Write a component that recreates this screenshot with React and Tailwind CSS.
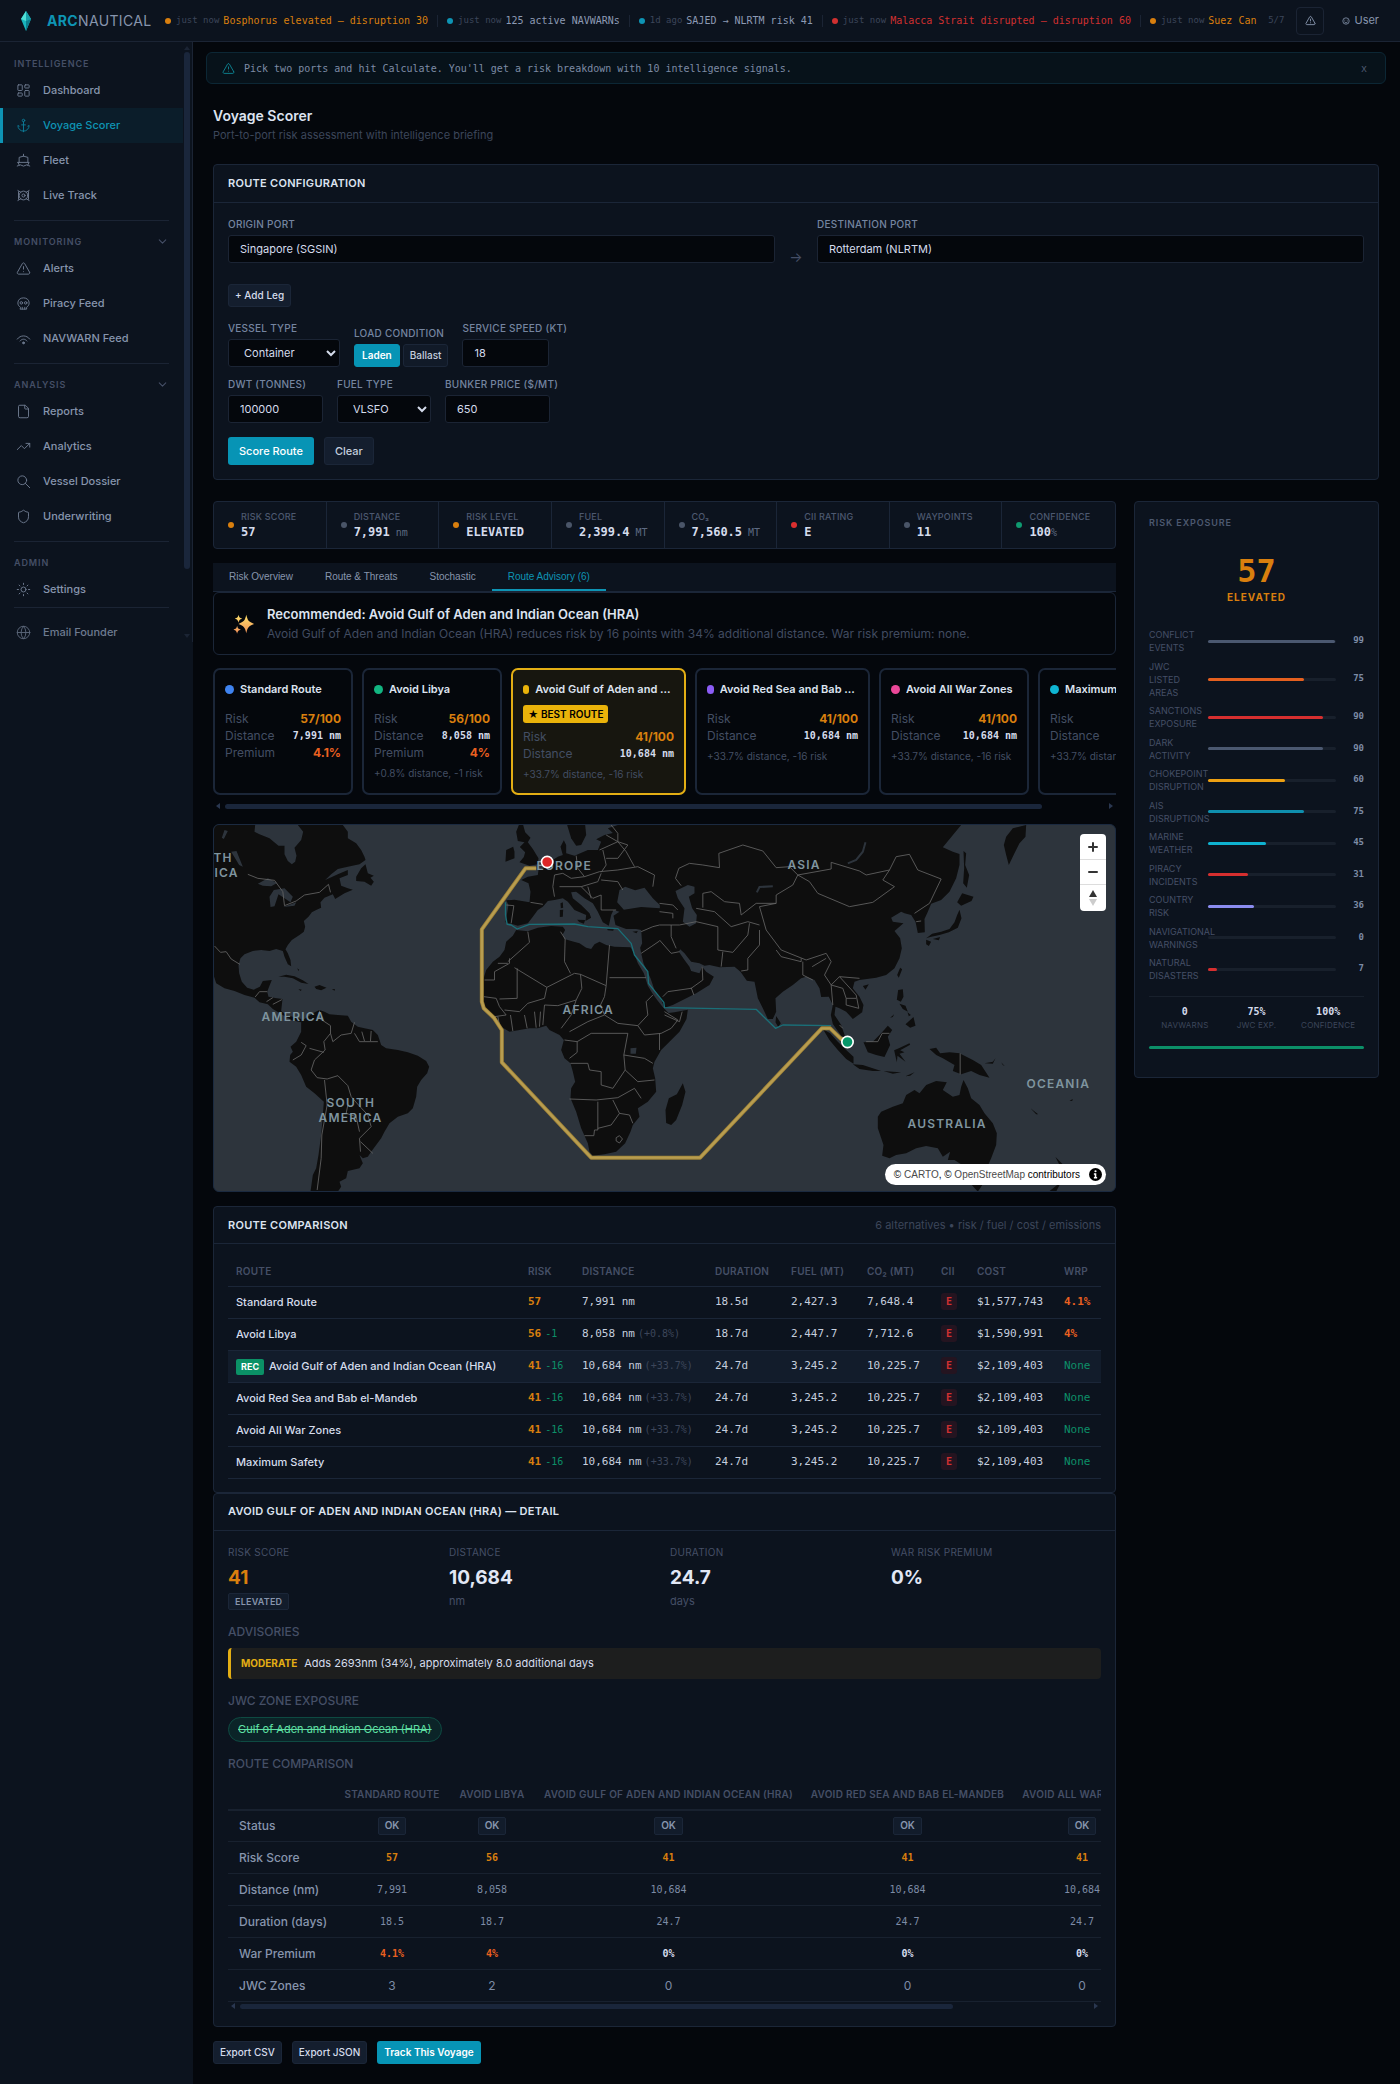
import {useState} from "react";
import {
    Anchor,
    ChevronDown,
    File,
    Globe,
    LayoutDashboard,
    Shield,
    Sun,
    TrendingUp,
    TriangleAlert,
} from "lucide-react";

const MONO = "font-['DejaVu_Sans_Mono','Liberation_Mono',monospace]"

const ticker = [
    {time: "just now", text: "Bosphorus elevated — disruption 30", dot: "bg-[#d97f0e]", color: "text-[#d97f0e]"},
    {time: "just now", text: "125 active NAVWARNs", dot: "bg-[#0e94b4]", color: "text-[#8c9ab4]"},
    {time: "1d ago", text: "SAJED → NLRTM risk 41", dot: "bg-[#0e94b4]", color: "text-[#8c9ab4]"},
    {time: "just now", text: "Malacca Strait disrupted — disruption 60", dot: "bg-[#d03030]", color: "text-[#d03030]"},
    {time: "just now", text: "Suez Can", dot: "bg-[#d97f0e]", color: "text-[#d97f0e]"},
]

function ShipIcon(props) {
    return (
        <svg viewBox="0 0 24 24" fill="none" stroke="currentColor" strokeLinecap="round" strokeLinejoin="round" {...props}>
            <path d="M12 2v3M5 15V7l7-2 7 2v8M3 15h18l-2 4M5 19l-2-4M2 21c2 0 3-2 5-2s3 2 5 2 3-2 5-2 3 2 5 2"/>
        </svg>
    )
}

function TrackIcon(props) {
    return (
        <svg viewBox="0 0 24 24" fill="none" stroke="currentColor" strokeLinecap="round" {...props}>
            <circle cx="12" cy="12" r="2.5"/>
            <circle cx="12" cy="12" r="7"/>
            <path d="M3 4l5 3M21 4l-5 3M21 20l-5-3M3 20l5-3M4 6v12M20 6v12"/>
        </svg>
    )
}

function SkullIcon(props) {
    return (
        <svg viewBox="0 0 24 24" fill="none" stroke="currentColor" strokeLinecap="round" strokeLinejoin="round" {...props}>
            <path d="M7 18c-3-2-4-4-4-7 0-5 4-8 9-8s9 3 9 8c0 3-1 5-4 7v3H7zM10 18v3M14 18v3"/>
            <circle cx="8.500" cy="11" r="2"/>
            <circle cx="15.500" cy="11" r="2"/>
        </svg>
    )
}

function SearchIcon(props) {
    return (
        <svg viewBox="0 0 24 24" fill="none" stroke="currentColor" strokeLinecap="round" {...props}>
            <circle cx="10" cy="10" r="7"/>
            <path d="M15 15l7 7"/>
        </svg>
    )
}

function SignalIcon(props) {
    return (
        <svg viewBox="0 0 24 24" fill="none" stroke="currentColor" strokeLinecap="round" {...props}>
            <path d="M2 13c5-7 15-7 20 0M6.500 16c3-4 8-4 11 0"/>
            <circle cx="12" cy="19" r="1.500" fill="currentColor"/>
        </svg>
    )
}

const sections = [
    {
        title: "Intelligence", items: [
            {label: "Dashboard", icon: LayoutDashboard},
            {label: "Voyage Scorer", icon: Anchor, active: true},
            {label: "Fleet", icon: ShipIcon},
            {label: "Live Track", icon: TrackIcon},
        ]
    },
    {
        title: "Monitoring", collapsible: true, items: [
            {label: "Alerts", icon: TriangleAlert},
            {label: "Piracy Feed", icon: SkullIcon},
            {label: "NAVWARN Feed", icon: SignalIcon},
        ]
    },
    {
        title: "Analysis", collapsible: true, items: [
            {label: "Reports", icon: File},
            {label: "Analytics", icon: TrendingUp},
            {label: "Vessel Dossier", icon: SearchIcon},
            {label: "Underwriting", icon: Shield},
        ]
    },
    {title: "Admin", items: [{label: "Settings", icon: Sun}]},
]

const stats = [
    {label: "Risk score", value: "57", dot: "bg-[#d97f0e]"},
    {label: "Distance", value: "7,991", unit: " nm", dot: "bg-[#4a5568]"},
    {label: "Risk level", value: "ELEVATED", dot: "bg-[#d97f0e]"},
    {label: "Fuel", value: "2,399.4", unit: " MT", dot: "bg-[#4a5568]"},
    {label: "CO₂", value: "7,560.5", unit: " MT", dot: "bg-[#4a5568]"},
    {label: "CII rating", value: "E", dot: "bg-[#dc2f2f]"},
    {label: "Waypoints", value: "11", dot: "bg-[#4a5568]"},
    {label: "Confidence", value: "100", unit: "%", dot: "bg-[#0f9a70]"},
]

const routeCards = [
    {name: "Standard Route", dot: "bg-[#3f83f0]", width: "w-[140px]", risk: "57/100", distance: "7,991 nm", premium: "4.1%"},
    {name: "Avoid Libya", dot: "bg-[#12b581]", width: "w-[140px]", risk: "56/100", distance: "8,058 nm", premium: "4%", delta: "+0.8% distance, -1 risk"},
    {name: "Avoid Gulf of Aden and Indian Ocean", dot: "bg-[#eab30a]", width: "w-[175px]", risk: "41/100", distance: "10,684 nm", delta: "+33.7% distance, -16 risk", best: true},
    {name: "Avoid Red Sea and Bab el-Mandeb", dot: "bg-[#8b5cf6]", width: "w-[175px]", risk: "41/100", distance: "10,684 nm", delta: "+33.7% distance, -16 risk"},
    {name: "Avoid All War Zones", dot: "bg-[#ec4899]", width: "w-[150px]", risk: "41/100", distance: "10,684 nm", delta: "+33.7% distance, -16 risk"},
    {name: "Maximum Safety", dot: "bg-[#0fb5d3]", width: "w-[150px]", risk: "41/100", distance: "10,684 nm", delta: "+33.7% distance, -16 risk"},
]

const comparison = [
    {name: "Standard Route", risk: "57", distance: "7,991 nm", duration: "18.5d", fuel: "2,427.3", co2: "7,648.4", cost: "$1,577,743", wrp: "4.1%"},
    {name: "Avoid Libya", risk: "56", diff: "-1", distance: "8,058 nm", extra: "(+0.8%)", duration: "18.7d", fuel: "2,447.7", co2: "7,712.6", cost: "$1,590,991", wrp: "4%"},
    {name: "Avoid Gulf of Aden and Indian Ocean (HRA)", rec: true, risk: "41", diff: "-16", distance: "10,684 nm", extra: "(+33.7%)", duration: "24.7d", fuel: "3,245.2", co2: "10,225.7", cost: "$2,109,403", wrp: "None"},
    {name: "Avoid Red Sea and Bab el-Mandeb", risk: "41", diff: "-16", distance: "10,684 nm", extra: "(+33.7%)", duration: "24.7d", fuel: "3,245.2", co2: "10,225.7", cost: "$2,109,403", wrp: "None"},
    {name: "Avoid All War Zones", risk: "41", diff: "-16", distance: "10,684 nm", extra: "(+33.7%)", duration: "24.7d", fuel: "3,245.2", co2: "10,225.7", cost: "$2,109,403", wrp: "None"},
    {name: "Maximum Safety", risk: "41", diff: "-16", distance: "10,684 nm", extra: "(+33.7%)", duration: "24.7d", fuel: "3,245.2", co2: "10,225.7", cost: "$2,109,403", wrp: "None"},
]

const detailStats = [
    {label: "Risk score", value: "41", badge: "ELEVATED"},
    {label: "Distance", value: "10,684", unit: "nm"},
    {label: "Duration", value: "24.7", unit: "days"},
    {label: "War risk premium", value: "0%"},
]

const matrixHead = ["Standard Route", "Avoid Libya", "Avoid Gulf of Aden and Indian Ocean (HRA)", "Avoid Red Sea and Bab el-Mandeb", "Avoid All War Zones", "Maximum Safety"]

const matrix = [
    {label: "Risk Score", mono: true, cells: ["57", "56", "41", "41", "41", "41"], color: () => "text-[#d97f0e] font-bold"},
    {label: "Distance (nm)", mono: true, cells: ["7,991", "8,058", "10,684", "10,684", "10,684", "10,684"], color: () => "text-[#7d8ba5]"},
    {label: "Duration (days)", mono: true, cells: ["18.5", "18.7", "24.7", "24.7", "24.7", "24.7"], color: () => "text-[#7d8ba5]"},
    {label: "War Premium", mono: true, cells: ["4.1%", "4%", "0%", "0%", "0%", "0%"], color: (v) => v === "0%" ? "text-[#d5dcec] font-bold" : "text-[#ea6020] font-bold"},
    {label: "JWC Zones", cells: ["3", "2", "0", "0", "0", "0"], color: () => "text-[#7d8ba5]"},
]

const exposure = [
    {label: "Conflict events", value: 99, color: "bg-[#4b5870]"},
    {label: "JWC listed areas", value: 75, color: "bg-[#e5601f]"},
    {label: "Sanctions exposure", value: 90, color: "bg-[#d62f2f]"},
    {label: "Dark activity", value: 90, color: "bg-[#4b5870]"},
    {label: "Chokepoint disruption", value: 60, color: "bg-[#eda012]"},
    {label: "AIS disruptions", value: 75, color: "bg-[#0f8fae]"},
    {label: "Marine weather", value: 45, color: "bg-[#0fb2d0]"},
    {label: "Piracy incidents", value: 31, color: "bg-[#d62f2f]"},
    {label: "Country risk", value: 36, color: "bg-[#8b8cf0]"},
    {label: "Navigational warnings", value: 0, color: "bg-[#4b5870]"},
    {label: "Natural disasters", value: 7, color: "bg-[#d62f2f]"},
]

function Header() {
    return (
        <header className="flex h-[42px] items-center border-b border-[#1b2434] bg-[#0c131e] pr-[21px]">
            <div className="flex w-[165px] shrink-0 items-center pl-[18px]">
                <svg viewBox="0 0 16 20" className="h-5 w-4" aria-hidden="true">
                    <path d="M8 0 13 8 8 20 3 8z" fill="#19b5bd"/>
                    <path d="M8 0 3 8l5 2z" fill="#4fe0d6"/>
                    <path d="M8 0l5 8-5 2z" fill="#18a0a8"/>
                    <path d="M8 10l5-2-5 12z" fill="#0c7f8e"/>
                </svg>
                <div className="ml-[13px] text-[14px] tracking-wide text-[#8795ad]">
                    <span className="font-bold text-[#0e94b4]">ARC</span>NAUTICAL
                </div>
            </div>
            <div className={`flex min-w-0 flex-1 items-center overflow-hidden whitespace-nowrap ${MONO}`}>
                {ticker.map((item, i) => (
                    <div key={i} className="flex shrink-0 items-center">
                        {i > 0 && <span className="mx-[9px] h-3 w-px bg-[#1b2434]"/>}
                        <span className={`h-[6px] w-[6px] rounded-full ${item.dot}`}/>
                        <span className="ml-[5px] text-[9px] text-[#3c465a]">{item.time}</span>
                        <span className={`ml-[4px] text-[10px] ${item.color}`}>{item.text}</span>
                    </div>
                ))}
            </div>
            <span className={`ml-[10px] text-[9px] text-[#3c465a] ${MONO}`}>5/7</span>
            <button aria-label="Alerts" className="ml-[12px] flex h-7 w-7 items-center justify-center rounded border border-[#1b2434] text-[#8795ad]">
                <TriangleAlert size={11}/>
            </button>
            <button className="ml-[18px] flex items-center gap-1 text-[11px] text-[#8795ad]">
                <svg viewBox="0 0 10 10" className="h-2 w-2" fill="none" stroke="currentColor" aria-hidden="true">
                    <circle cx="5" cy="5" r="4"/>
                    <path d="M3 4h1M6 4h1M3 6c1 1.500 3 1.500 4 0"/>
                </svg>
                User
            </button>
        </header>
    )
}

function NavItem({item}) {
    const Icon = item.icon
    return (
        <a
            href="#"
            className={item.active
                ? "flex h-[35px] items-center gap-[12px] border-l-[3px] border-[#0e94b4] bg-[#0b1d2a] pl-[13px] text-[11px] font-medium text-[#0e94b4]"
                : "flex h-[35px] items-center gap-[12px] border-l-[3px] border-transparent pl-[13px] text-[11px] font-medium text-[#8795ad]"}
        >
            <Icon width={15} height={15} strokeWidth={1.500} className="opacity-80"/>
            {item.label}
        </a>
    )
}

function Sidebar() {
    return (
        <aside className="w-[193px] shrink-0 bg-[#0c131e]">
            <div className="flex h-[600px] border-r border-[#1b2434]">
                <nav className="w-[183px] pt-px">
                    {sections.map((section, i) => (
                        <div key={section.title} className="pt-[11px]">
                            <div className="mr-[14px] ml-[14px] flex h-[19px] items-center justify-between text-[9px] font-semibold tracking-widest text-[#454f66] uppercase">
                                {section.title}
                                {section.collapsible && <ChevronDown size={13}/>}
                            </div>
                            <div>
                                {section.items.map((item) => <NavItem key={item.label} item={item}/>)}
                            </div>
                            {i < 3 && <hr className="mx-[14px] mt-[7px] border-[#1b2434]"/>}
                        </div>
                    ))}
                    <hr className="mx-[14px] border-[#1b2434]"/>
                    <div className="pt-[7px] opacity-80">
                        <NavItem item={{label: "Email Founder", icon: Globe}}/>
                    </div>
                </nav>
                <div className="flex w-2 flex-col items-center py-1 text-[#1b2434]">
                    <svg viewBox="0 0 6 4" className="h-1 w-[6px] fill-current"><path d="M3 0l3 4H0z"/></svg>
                    <div className="mt-[2px] h-[517px] w-[6px] rounded-full bg-[#1a263b]"/>
                    <svg viewBox="0 0 6 4" className="mt-auto h-1 w-[6px] fill-current"><path d="M0 0h6L3 4z"/></svg>
                </div>
            </div>
        </aside>
    )
}

function ScrollBar({thumb}) {
    return (
        <div className="flex h-[6px] items-center gap-[5px] px-[3px] text-[#2a3750]">
            <svg viewBox="0 0 4 6" className="h-[6px] w-1 fill-current"><path d="M4 0v6L0 3z"/></svg>
            <div className="flex-1">
                <div className={`h-[5px] rounded-full bg-[#1a263b] ${thumb}`}/>
            </div>
            <svg viewBox="0 0 4 6" className="h-[6px] w-1 fill-current"><path d="M0 0v6l4-3z"/></svg>
        </div>
    )
}

const LABEL = "block h-[14px] text-[10px] leading-[14px] font-medium tracking-wide text-[#7585a0] uppercase"
const INPUT = "block h-[28px] rounded-[3px] border border-[#1b2434] bg-[#04070c] px-[11px] text-[11px] text-[#d5dcec]"
const SMALL_BUTTON = "block h-[23px] rounded-[3px] border border-[#1b2638] bg-[#141e2e] px-[6px] text-[10px] font-medium text-[#d5dcec]"

function RouteForm() {
    const [load, setLoad] = useState("Laden")

    return (
        <section className="rounded-[4px] border border-[#1b2638] bg-[#0c131e]">
            <h2 className="flex h-[38px] items-center border-b border-[#1b2638] px-[14px] text-[11px] font-semibold tracking-wide text-[#dde3f0]">ROUTE CONFIGURATION</h2>
            <form className="px-[14px] pt-[14px] pb-[14px]" onSubmit={(e) => e.preventDefault()}>
                <div className="flex items-start gap-[14px]">
                    <div className="flex-1">
                        <label htmlFor="origin" className={LABEL}>Origin port</label>
                        <input id="origin" defaultValue="Singapore (SGSIN)" className={`mt-[4px] w-full ${INPUT}`}/>
                    </div>
                    <span className="w-[14px] pt-[30px] text-center text-[14px] leading-[20px] text-[#454f66]">→</span>
                    <div className="flex-1">
                        <label htmlFor="destination" className={LABEL}>Destination port</label>
                        <input id="destination" defaultValue="Rotterdam (NLRTM)" className={`mt-[4px] w-full ${INPUT}`}/>
                    </div>
                </div>
                <button type="button" className={`mt-[17px] ${SMALL_BUTTON}`}>+ Add Leg</button>
                <div className="mt-[14px] flex items-end gap-[14px]">
                    <div>
                        <label htmlFor="vessel" className={LABEL}>Vessel type</label>
                        <select id="vessel" className={`mt-[4px] w-[112px] ${INPUT}`}>
                            <option>Container</option>
                            <option>Tanker</option>
                            <option>Bulk Carrier</option>
                        </select>
                    </div>
                    <fieldset>
                        <legend className={LABEL}>Load condition</legend>
                        <div className="mt-[4px] flex gap-[3px]">
                            {["Laden", "Ballast"].map((name) => (
                                <button
                                    key={name}
                                    type="button"
                                    onClick={() => setLoad(name)}
                                    className={load === name
                                        ? "h-[23px] rounded-[3px] border border-[#0794b5] bg-[#0794b5] px-[7px] text-[10px] font-semibold text-white"
                                        : "h-[23px] rounded-[3px] border border-[#1b2638] bg-[#111a28] px-[6px] text-[10px] font-medium text-[#c5cede]"}
                                >
                                    {name}
                                </button>
                            ))}
                        </div>
                    </fieldset>
                    <div>
                        <label htmlFor="speed" className={LABEL}>Service speed (kt)</label>
                        <input id="speed" defaultValue="18" className={`mt-[4px] w-[87px] ${INPUT}`}/>
                    </div>
                </div>
                <div className="mt-[10px] flex gap-[14px]">
                    <div>
                        <label htmlFor="dwt" className={LABEL}>DWT (tonnes)</label>
                        <input id="dwt" defaultValue="100000" className={`mt-[4px] w-[95px] ${INPUT}`}/>
                    </div>
                    <div>
                        <label htmlFor="fuel" className={LABEL}>Fuel type</label>
                        <select id="fuel" className={`mt-[4px] w-[94px] ${INPUT}`}>
                            <option>VLSFO</option>
                            <option>HFO</option>
                            <option>MGO</option>
                        </select>
                    </div>
                    <div>
                        <label htmlFor="bunker" className={LABEL}>Bunker price ($/mt)</label>
                        <input id="bunker" defaultValue="650" className={`mt-[4px] w-[105px] ${INPUT}`}/>
                    </div>
                </div>
                <div className="mt-[14px] flex gap-[10px]">
                    <button type="submit" className="h-[28px] rounded-[3px] bg-[#0794b5] px-[11px] text-[11px] font-medium text-white">Score Route</button>
                    <button type="reset" className="h-[28px] rounded-[3px] border border-[#1b2638] bg-[#141e2e] px-[10px] text-[11px] font-medium text-[#c5cede]">Clear</button>
                </div>
            </form>
        </section>
    )
}

function StatBar() {
    return (
        <div className="grid h-[48px] grid-cols-8 divide-x divide-[#1b2638] rounded-[4px] border border-[#1b2638] bg-[#0c131e]">
            {stats.map((s) => (
                <div key={s.label} className="flex items-center gap-[7px] pl-[14px]">
                    <span className={`h-[6px] w-[6px] shrink-0 rounded-full ${s.dot}`}/>
                    <div className="whitespace-nowrap">
                        <div className="text-[9px] leading-[14px] font-medium tracking-wide text-[#4d5970] uppercase">{s.label}</div>
                        <div className={`text-[12px] leading-[17px] font-bold text-[#d5dcec] ${MONO}`}>
                            {s.value}
                            {s.unit && <span className="text-[10px] font-normal whitespace-pre text-[#5d6a82]">{s.unit}</span>}
                        </div>
                    </div>
                </div>
            ))}
        </div>
    )
}

function Tabs() {
    const tabs = ["Risk Overview", "Route & Threats", "Stochastic", "Route Advisory (6)"]
    return (
        <div role="tablist" className="flex h-[29px] border-b border-[#1b2638] bg-[#0c131e] font-['Liberation_Sans',Arial,sans-serif] text-[10px]">
            {tabs.map((tab, i) => (
                <button
                    key={tab}
                    role="tab"
                    aria-selected={i === 3}
                    className={i === 3
                        ? "border-b-2 border-[#0e94b4] px-[16px] text-[#0e94b4]"
                        : "border-b-2 border-transparent px-[16px] text-[#8795ad]"}
                >
                    {tab}
                </button>
            ))}
        </div>
    )
}

function Recommendation() {
    return (
        <div className="flex h-[63px] items-center rounded-[6px] border border-[#1b2638] px-[19px]">
            <svg viewBox="0 0 24 24" className="h-[22px] w-[22px]" aria-hidden="true">
                <defs>
                    <linearGradient id="spark" x1="0" y1="0" x2="0" y2="1">
                        <stop offset="0" stopColor="#fde06a"/>
                        <stop offset="1" stopColor="#f4925a"/>
                    </linearGradient>
                </defs>
                <path fill="url(#spark)" d="M14.500 2c1.500 6.500 2.500 7.500 8.500 10-6 2.500-7 3.500-8.500 10-1.500-6.500-2.500-7.500-8.500-10 6-2.500 7-3.500 8.500-10zM6 2c.8 3 1.300 3.500 4 4.200C7.300 7 6.800 7.500 6 10.500 5.200 7.500 4.700 7 2 6.200 4.700 5.500 5.200 5 6 2zM4.500 14c.8 3 1.300 3.500 4 4.200-2.700.8-3.200 1.300-4 4.300-.8-3-1.300-3.500-4-4.300 2.700-.7 3.200-1.200 4-4.200z"/>
            </svg>
            <div className="ml-[12px] whitespace-nowrap">
                <h3 className="text-[13px] leading-[20px] font-semibold text-[#dde3f0]">Recommended: Avoid Gulf of Aden and Indian Ocean (HRA)</h3>
                <p className="text-[12px] leading-[19px] text-[#414b60]">Avoid Gulf of Aden and Indian Ocean (HRA) reduces risk by 16 points with 34% additional distance. War risk premium: none.</p>
            </div>
        </div>
    )
}

function RouteCard({route}) {
    return (
        <article
            className={route.best
                ? `h-[127px] shrink-0 rounded-[7px] border-2 border-[#e3ae14] bg-[#17160f] px-[10px] pt-[10px] ${route.width}`
                : `h-[127px] shrink-0 rounded-[7px] border-2 border-[#1b2638] px-[10px] pt-[10px] ${route.width}`}
        >
            <div className="flex h-[18px] items-center gap-[6px]">
                <span className={`h-[9px] w-[9px] rounded-full ${route.dot}`}/>
                <h4 className="min-w-0 truncate pr-[3px] text-[11px] font-semibold text-[#dde3f0]">{route.name}</h4>
            </div>
            {route.best
                ? <div className="mt-[7px] mb-[5px] flex h-[18px] w-fit items-center rounded-[3px] bg-[#eab30a] px-[5px] text-[10px] font-semibold text-black">★ BEST ROUTE</div>
                : <div className="h-[12px]"/>}
            <dl className="text-[12px] leading-[17px] text-[#434e63]">
                <div className="flex justify-between">
                    <dt>Risk</dt>
                    <dd className="font-bold text-[#d97f0e]">{route.risk}</dd>
                </div>
                <div className="flex justify-between">
                    <dt>Distance</dt>
                    <dd className={`text-[10px] font-bold text-[#d5dcec] ${MONO}`}>{route.distance}</dd>
                </div>
                {route.premium && (
                    <div className="flex justify-between">
                        <dt>Premium</dt>
                        <dd className="font-bold text-[#ea6020]">{route.premium}</dd>
                    </div>
                )}
            </dl>
            {route.delta && <p className="mt-[4px] text-[10px] leading-[17px] whitespace-nowrap text-[#434e63]">{route.delta}</p>}
        </article>
    )
}

// Outlines use a 3x grid, east shapes are shifted by 1365 units
const WEST_LAND = [
    "M27 30H152L150 50 165 58 195 70 222 92 240 92 240 118 250 138 262 148 272 140 276 122 270 98 290 75 296 50 280 30H415L430 50 430 70 455 85 470 105 480 125 483 135 465 148 430 155 400 162 380 178 362 195 400 178 430 165 430 180 405 190 410 212 430 220 445 224 420 235 392 252 385 238 360 248 348 262 350 278 335 285 322 292 312 305 298 318 302 335 298 350 285 360 262 375 250 390 243 403 250 415 258 435 260 454 250 448 240 425 235 408 215 402 195 408 170 405 145 408 120 418 108 430 102 450 104 475 112 500 128 518 148 524 166 515 175 498 202 495 195 512 188 530 192 545 212 549 234 552 232 570 230 588 245 600 268 606 290 612 290 622 262 616 235 600 205 582 190 568 165 562 150 548 120 540 90 528 60 520 35 505 27 480z",
    "M483 148 470 160 455 185 455 198 480 200 500 212 508 200 498 188 508 182 490 175z",
    "M222 485 245 479 270 484 295 496 312 507 290 503 265 490 240 485z",
    "M330 515 345 510 366 518 350 526 335 522z",
    "M382 522 392 523 390 527zM282 522 292 524 288 528zM278 460 284 464 282 468z",
    "M290 618 310 605 325 595 345 585 360 590 375 598 400 600 430 602 440 620 460 635 480 640 505 645 520 660 530 690 545 700 580 705 610 712 640 722 665 738 674 755 668 775 650 795 638 815 635 845 625 880 610 895 580 905 555 925 540 950 530 970 515 990 500 1010 490 1025 475 1030 465 1020 475 1045 465 1060 430 1068 425 1090 405 1100 410 1115 400 1130H318L325 1080 335 1060 342 1020 350 960 355 900 358 860 330 835 305 815 290 780 275 755 255 740 257 720 265 710 258 695 275 680 290 650z",
    "M943 30 935 50 940 78 960 82 946 96 962 112 958 126 945 142 975 152 1000 148 1002 130 985 102 970 82 978 68 962 52 956 30z",
    "M926 95 905 105 903 140 930 130 930 110z",
    "M935 345 970 349 1000 338 1040 333 1075 335 1082 345 1075 358 1080 372 1100 378 1125 385 1145 398 1160 402 1170 388 1185 380 1205 390 1230 395 1278 397 1290 418 1300 445 1318 475 1330 512 1345 537 1358 555 1374 575 1392 594 1410 592 1450 584 1446 612 1425 650 1395 680 1370 705 1350 740 1345 760 1352 790 1355 830 1330 860 1300 880 1305 905 1285 930 1278 950 1262 985 1235 1010 1200 1018 1165 1022 1155 1010 1150 985 1130 940 1115 890 1098 850 1100 820 1112 800 1105 770 1098 745 1080 730 1070 705 1078 675 1065 660 1035 645 1025 632 1000 640 975 640 945 645 915 650 890 635 865 605 840 585 834 555 838 520 836 495 845 465 865 440 885 425 900 405 905 380 925 362z",
    "M1068 265 1075 262 1076 278 1069 280zM1066 285 1076 284 1075 305 1066 306zM1118 314 1142 315 1138 326 1124 321zM1208 342 1228 343 1226 347 1210 346zM1284 350 1300 348 1296 355z",
    "M1088 30 1100 70 1115 92 1130 90 1145 60 1142 30z",
]

const EAST_LAND = [
    "M-125 30H905L850 97 880 110 900 117 900 150 890 190 870 230 845 255 815 266 805 290 795 312 796 352 775 354 768 320 755 300 735 295 725 290 695 308 700 320 732 325 705 348 722 370 727 400 720 430 705 460 680 480 650 488 622 492 600 495 585 500 580 520 600 545 612 570 608 592 580 612 560 590 540 580 528 575 525 600 545 630 558 668 545 662 520 627 514 600 520 570 508 545 485 546 480 520 465 495 440 485 425 490 400 510 370 530 348 550 350 590 340 612 325 612 310 580 295 550 285 500 262 497 243 470 225 455 180 457 150 450 135 452 120 445 95 440 75 415 62 403 58 410 75 435 90 455 95 468 120 475 128 455 140 470 163 485 150 510 110 535 70 555 40 570 15 578 5 555-15 525-27 490-48 445-55 415-58 398-52 385-55 345-70 342-100 342-132 330-138 302-120 290-138 285-145 300-152 332-170 322-185 290-200 265-225 250-250 230-265 232-260 250-235 270-210 295-205 308-222 318-220 300-255 285-275 260-290 250-315 255-335 258-350 275-365 285-380 305-395 325-425 332-445 326-462 322-458 300-453 270-460 256-435 254-390 262-387 230-393 205-415 195-395 185-365 180-363 165-335 155-320 135-305 125-290 120-297 95-287 76-280 90-280 115-255 122-215 105-185 105-175 80-190 73-165 60-140 54-155 40z",
    "M912 108 920 115 917 150 929 180 922 218 911 205 914 160z",
    "M908 235 942 245 936 258 905 272 893 262z",
    "M900 284 906 310 895 338 868 352 840 360 812 366 800 370 818 356 845 350 870 342 885 322 893 300z",
    "M800 374 815 380 808 393 800 388zM820 372 842 366 838 376z",
    "M1060 40 1100 30 1098 65 1080 85 1065 115 1048 150 1040 120 1033 90 1040 65z",
    "M722 458 728 463 718 488 713 480zM610 513 628 508 618 524z",
    "M716 525 730 523 732 545 724 560 712 554zM720 566 738 572 745 590 730 582zM738 628 762 606 768 632 752 638zM744 592 754 600 748 604zM692 608 704 598 700 606z",
    "M490 642 512 655 535 680 560 705 582 725 582 746 560 732 535 705 510 675z",
    "M580 748 610 750 665 768 640 768 600 762zM672 768 700 770 725 772 700 776zM738 784 765 772 752 782z",
    "M612 682 640 680 665 655 685 632 698 645 685 665 692 690 675 726 650 720 625 712z",
    "M704 706 718 700 750 685 752 689 722 706 735 712 720 716 738 740 714 722 712 742z",
    "M810 702 830 698 842 715 870 712 900 715 940 735 965 750 990 788 960 780 935 768 905 778 880 768 885 750 850 730 830 720zM975 745 1000 740 1008 730 1000 746zM1025 742 1036 754 1030 750z",
    "M655 905 665 890 700 875 730 865 740 840 765 825 780 835 800 810 830 798 862 802 850 825 880 845 900 840 905 815 912 795 925 820 935 850 960 870 975 895 1000 925 1012 955 1010 990 995 1030 985 1052 930 1060 900 1045 885 1035 865 1035 872 1010 850 1025 835 1000 800 993 770 1000 740 1015 710 1020 690 1030 668 1022 672 990 655 940z",
    "M935 1108 970 1108 955 1130zM1188 1026 1212 1050 1205 1060zM1168 1130 1205 1100 1190 1130z",
    "M350 603 364 625 356 636 348 622zM1113 880 1136 898 1130 898zM1230 857 1240 852 1238 858z",
    "M70 805 78 830 68 870 50 915 35 930 20 924 18 885 28 850 52 838z",
]

const WEST_WATER = [
    "M160 206 190 190 218 204 200 214 175 212zM195 245 208 225 240 220 265 245 258 262 240 250 222 238 210 274 198 276zM236 276 275 262 270 272zM60 45 70 48 58 72 52 68z",
    "M1245 225 1262 215 1292 226 1320 218 1345 250 1366 270 1366 280 1310 276 1258 284 1238 262z",
    "M1278 700 1296 698 1294 716 1278 716zM80 110 96 108 115 155 104 150z",
]

const WEST_BORDERS = [
    "M30 393 48 412 65 410 80 432 106 448M130 178 160 190 210 196 235 230 240 272 275 258 300 240 345 232 372 208 378 232M152 546 165 530 188 530M186 560 205 548M205 568 232 554",
    "M345 587 345 610 378 632 378 655 385 680 410 660 440 655 450 622M378 655 358 680 362 705 330 735 320 765 338 788 368 792 400 782 430 812 440 845 462 870 490 900 500 935 465 970 468 1010M290 682 305 692 290 720 265 735M315 700 358 712M450 655 465 680 520 680M472 650 480 678M500 648 498 678M360 795 368 870 352 960 350 1030 338 1125M430 870 425 895 455 905 465 950M468 980 505 1015",
    "M840 495 870 495 870 470 915 445 915 430M910 440 975 382 970 350M930 458 1027 517 1110 475 1128 478 1205 512 1215 390M1215 488 1325 488M1082 372 1080 440 1098 475M1068 350 1082 372M880 445 910 445M938 460 938 550 885 552M1027 517 1020 550 970 565 945 590 900 585M1128 478 1132 520 1115 555 1060 572 1020 570M1205 512 1200 545 1188 570 1200 600 1150 620 1095 650M838 545 875 550 885 575 905 600 870 605M880 605 885 630M918 600 925 648M960 600 968 640M990 590 995 638M1008 590 1005 635M1020 570 1015 630M1115 555 1100 600 1070 640M1200 600 1240 625 1300 632 1330 600 1325 560 1345 540M1300 632 1320 660 1370 655 1400 640 1420 615 1380 590M1365 655 1365 705M1270 655 1258 720 1320 730 1345 745M1258 720 1262 765 1300 800 1350 795M1080 675 1118 680 1118 712 1095 730M1118 680 1160 655 1270 655M1098 745 1150 745 1155 765 1190 770 1190 810 1225 820 1262 765M1095 852 1175 855 1240 848 1290 820 1310 850M1180 860 1180 945 1170 945 1168 962 1140 962M1180 940 1220 930 1245 895 1275 900 1285 925M1225 855 1245 895M1235 968 1245 962 1254 972 1245 984 1235 978z",
    "M905 270 928 272 920 325M978 262 1015 268M1045 215 1050 180 1075 175M1045 215 1050 245M1075 175 1100 190 1140 185 1185 170 1240 165M1065 215 1130 215 1180 200 1190 175M1115 122 1120 160 1140 185M1195 105 1205 150 1190 172M1185 105 1240 80 1205 60M1240 80 1270 90 1240 130 1205 130M1240 165 1300 155 1350 180 1345 215M1190 195 1240 200 1255 225M1130 215 1165 250 1190 240 1190 285 1235 285M1150 215 1160 250M1220 30 1240 55 1240 80M1240 80 1265 110 1290 155",
]

const EAST_BORDERS = [
    "M65 212 48 190 58 160 90 145 130 150 180 158 178 115 250 90 310 108 350 158 390 155 415 180 515 162 515 142 600 168 620 180 690 165 710 125 750 118 775 165 845 192 810 265 765 295M415 180 400 210 350 240 350 265 300 275 320 345 365 405 440 435 500 415 515 440M415 180 450 200 475 235 570 275 640 262 705 215 670 195 690 165M130 278 130 235 155 230 195 260 240 265 245 300 290 265 350 265M110 280 165 290 215 335 265 320 300 330M0 330 60 330 110 320 175 335 175 405 220 412 265 360 270 325M185 455 190 410M300 345 300 390 265 430 265 465 245 468M350 405 365 425 425 440 425 430M430 440 430 480 460 495M458 455 500 430M515 440 495 480 515 510 520 570M515 510 540 485 600 490M540 485 590 540 598 580 560 570 560 550 590 550M515 510 550 520 560 550M540 630 550 640M770 320 785 318",
    "M0 375 35 415 60 410M35 330 35 365 50 400M-55 350-20 335 0 330M-55 415-25 395 0 378M10 545 25 530 95 520 130 495 128 455M95 518 103 540M0 265 40 270 55 285M0 290 40 295 40 310M15 600 60 620 68 590M902 715 902 778M620 680 655 680 668 655 690 655",
]

const mapLabels = [
    {x: 0, y: 37, text: "TH"},
    {x: 1, y: 52, text: "ICA"},
    {x: 48, y: 196, text: "AMERICA"},
    {x: 113, y: 282, text: "SOUTH"},
    {x: 105, y: 297, text: "AMERICA"},
    {x: 323, y: 45, text: "EUROPE"},
    {x: 349, y: 189, text: "AFRICA"},
    {x: 574, y: 44, text: "ASIA"},
    {x: 694, y: 303, text: "AUSTRALIA"},
    {x: 813, y: 263, text: "OCEANIA"},
]

function RouteMap() {
    return (
        <div className="relative h-[368px] overflow-hidden rounded-[6px] border border-[#1b2a40] bg-[#2d343c]">
            <svg viewBox="0 0 902 366" preserveAspectRatio="xMidYMid slice" className="h-full w-full" role="img" aria-label="Route map">
                <g transform="scale(.33333) translate(-27 -30)">
                    <g fill="#0e0e0e">
                        {WEST_LAND.map((d) => <path key={d} d={d}/>)}
                        <g transform="translate(1365 0)">
                            {EAST_LAND.map((d) => <path key={d} d={d}/>)}
                        </g>
                    </g>
                    <g fill="#2d343c">
                        {WEST_WATER.map((d) => <path key={d} d={d}/>)}
                        <path transform="translate(1365 0)" d="M48 228 85 210 105 215 105 235 88 245 98 280 112 300 110 325 90 335 70 320 75 280 55 250z"/>
                    </g>
                    <g fill="none" stroke="#2d343c" strokeWidth="6">
                        <path transform="translate(1365 0)" d="M618 82 610 110 590 135 565 145M292 232 300 216 340 214"/>
                    </g>
                    <g fill="none" stroke="#666" strokeWidth="2.500" strokeLinejoin="round">
                        {WEST_BORDERS.map((d) => <path key={d} d={d}/>)}
                        <g transform="translate(1365 0)">
                            {EAST_BORDERS.map((d) => <path key={d} d={d}/>)}
                        </g>
                    </g>
                </g>
                <g fill="#7f949f" className="font-['Inter',sans-serif] text-[12px] font-semibold tracking-widest">
                    {mapLabels.map((l, i) => <text key={i} x={l.x} y={l.y}>{l.text}</text>)}
                </g>
                <g transform="scale(.33333) translate(-27 -30)" fill="none" strokeLinejoin="round">
                    <path stroke="#1a6f78" strokeWidth="4" d="M903 262V300L908 328 920 330 938 342 975 328 1110 327 1150 335 1240 341 1280 385 1290 420 1330 470 1332 505 1378 562 1380 578 1655 583 1713 640 1735 630 1880 632"/>
                    <path stroke="#9f8237" strokeWidth="12" d="M995 160H963L832 343V560L838 580 868 608 892 645V742L1160 1028H1487L1852 640H1877L1910 672H1929"/>
                    <path stroke="#b89d50" strokeWidth="7" d="M995 160H963L832 343V560L838 580 868 608 892 645V742L1160 1028H1487L1852 640H1877L1910 672H1929"/>
                    <circle cx="1028" cy="141" r="17" fill="#dc2626" stroke="#fff" strokeWidth="5"/>
                    <circle cx="1929" cy="681" r="17" fill="#059669" stroke="#fff" strokeWidth="5"/>
                </g>
            </svg>
            <div className="absolute top-[9px] right-[9px] w-[26px] divide-y divide-[#ddd] rounded-[4px] bg-white">
                <button aria-label="Zoom in" className="flex h-[26px] w-full items-center justify-center">
                    <svg viewBox="0 0 12 12" className="h-3 w-3" stroke="#333" strokeWidth="2" strokeLinecap="round"><path d="M6 2v8M2 6h8"/></svg>
                </button>
                <button aria-label="Zoom out" className="flex h-[25px] w-full items-center justify-center">
                    <svg viewBox="0 0 12 12" className="h-3 w-3" stroke="#333" strokeWidth="2" strokeLinecap="round"><path d="M2 6h8"/></svg>
                </button>
                <button aria-label="Reset bearing" className="flex h-[26px] w-full items-center justify-center">
                    <svg viewBox="0 0 8 16" className="h-4 w-2"><path d="M4 0l4 7H0z" fill="#333"/><path d="M4 16l4-7H0z" fill="#ccc"/></svg>
                </button>
            </div>
            <div className="absolute right-[9px] bottom-[6px] flex h-[21px] items-center gap-[9px] rounded-full bg-white pr-[4px] pl-[9px] font-['Liberation_Sans',Arial,sans-serif] text-[10px] text-black">
                <span>
                    © <a href="#" className="text-[#4a4a4a]">CARTO</a>, © <a href="#" className="text-[#4a4a4a]">OpenStreetMap</a> contributors
                </span>
                <svg viewBox="0 0 12 12" className="h-[13px] w-[13px]" aria-hidden="true">
                    <circle cx="6" cy="6" r="6"/>
                    <circle cx="6" cy="3" r="1" fill="#fff"/>
                    <path d="M4.500 5.500H6V9M4.500 9h3" stroke="#fff" strokeWidth="1.500" fill="none"/>
                </svg>
            </div>
        </div>
    )
}

function Comparison() {
    return (
        <section className="rounded-[4px] border border-[#1b2638] bg-[#0c131e]">
            <div className="flex h-[37px] items-center justify-between border-b border-[#1b2638] px-[14px]">
                <h2 className="text-[11px] font-semibold tracking-wide text-[#dde3f0]">ROUTE COMPARISON</h2>
                <span className="text-[11px] text-[#3c465a]">6 alternatives • risk / fuel / cost / emissions</span>
            </div>
            <div className="px-[14px] pt-[13px] pb-[13px]">
                <table className="w-full table-fixed text-left whitespace-nowrap">
                    <colgroup>
                        <col/>
                        <col className="w-[54px]"/>
                        <col className="w-[133px]"/>
                        <col className="w-[76px]"/>
                        <col className="w-[76px]"/>
                        <col className="w-[74px]"/>
                        <col className="w-[36px]"/>
                        <col className="w-[87px]"/>
                        <col className="w-[45px]"/>
                    </colgroup>
                    <thead>
                        <tr className="h-[29px] border-b border-[#1b2638] text-[10px] tracking-wide text-[#454f66]">
                            {["ROUTE", "RISK", "DISTANCE", "DURATION", "FUEL (MT)", "CO₂ (MT)", "CII", "COST", "WRP"].map((h) => (
                                <th key={h} className="pl-[8px] font-semibold">{h}</th>
                            ))}
                        </tr>
                    </thead>
                    <tbody className={`text-[11px] text-[#c5cede] ${MONO}`}>
                        {comparison.map((row) => (
                            <tr key={row.name} className={row.rec ? "h-[32px] border-b border-[#1b2638] bg-[#121c2b]" : "h-[32px] border-b border-[#1b2638]"}>
                                <td className="pl-[8px] font-['Inter',sans-serif] font-medium text-[#d5dcec]">
                                    {row.rec && <span className="mr-[5px] inline-block h-[16px] rounded-[2px] bg-[#0b9166] px-[5px] text-[9px] leading-[16px] font-bold text-white">REC</span>}
                                    {row.name}
                                </td>
                                <td className="pl-[8px] font-bold text-[#d97f0e]">
                                    {row.risk}
                                    {row.diff && <span className="ml-[4px] text-[10px] font-normal text-[#0d8f68]">{row.diff}</span>}
                                </td>
                                <td className="pl-[8px]">
                                    {row.distance}
                                    {row.extra && <span className="ml-[3px] text-[10px] text-[#3c465a]">{row.extra}</span>}
                                </td>
                                <td className="pl-[8px]">{row.duration}</td>
                                <td className="pl-[8px]">{row.fuel}</td>
                                <td className="pl-[8px]">{row.co2}</td>
                                <td className="pl-[8px]">
                                    <span className="inline-block h-[17px] rounded-[3px] bg-[#241420] px-[5px] text-[10px] leading-[17px] font-bold text-[#d03030]">E</span>
                                </td>
                                <td className="pl-[8px]">{row.cost}</td>
                                <td className={row.wrp === "None" ? "pl-[8px] text-[#0d8f68]" : "pl-[8px] font-bold text-[#ea6020]"}>{row.wrp}</td>
                            </tr>
                        ))}
                    </tbody>
                </table>
            </div>
        </section>
    )
}

const SUBHEAD = "text-[12px] leading-[16px] font-medium text-[#454f66]"

function Detail() {
    return (
        <section className="rounded-[4px] border border-[#1b2638] bg-[#0c131e]">
            <h2 className="flex h-[37px] items-center border-b border-[#1b2638] px-[14px] text-[11px] font-semibold tracking-wide text-[#dde3f0]">AVOID GULF OF ADEN AND INDIAN OCEAN (HRA) — DETAIL</h2>
            <div className="px-[14px] pt-[13px] pb-[17px]">
                <dl className="grid h-[67px] grid-cols-4 gap-[11px]">
                    {detailStats.map((s) => (
                        <div key={s.label}>
                            <dt className="mb-[2px] text-[10px] leading-[16px] tracking-wide text-[#454f66] uppercase">{s.label}</dt>
                            <dd className={s.badge ? "text-[19px] leading-[31px] font-bold text-[#d97f0e]" : "text-[19px] leading-[31px] font-bold text-[#e1e7f5]"}>{s.value}</dd>
                            {s.badge && <dd className="h-[17px] w-fit rounded-[2px] border border-[#1b2638] bg-[#121c2b] px-[6px] text-[9px] leading-[15px] font-semibold tracking-wide text-[#8795ad]">{s.badge}</dd>}
                            {s.unit && <dd className="text-[11px] leading-[16px] text-[#454f66]">{s.unit}</dd>}
                        </div>
                    ))}
                </dl>
                <h3 className={`mt-[13px] ${SUBHEAD}`}>ADVISORIES</h3>
                <div className="mt-[8px] flex h-[31px] items-center gap-[7px] rounded-[4px] border-l-[3px] border-[#e3ae14] bg-[#1d1e1e] pl-[10px]">
                    <span className="text-[10px] font-bold text-[#e3ae14]">MODERATE</span>
                    <span className="text-[11px] text-[#d5dcec]">Adds 2693nm (34%), approximately 8.0 additional days</span>
                </div>
                <h3 className={`mt-[14px] ${SUBHEAD}`}>JWC ZONE EXPOSURE</h3>
                <div className="mt-[8px] flex h-[25px] w-fit items-center rounded-full border border-[#0e4a42] bg-[#0b2428] px-[9px] text-[11px] text-[#5fe0a4] line-through">Gulf of Aden and Indian Ocean (HRA)</div>
                <h3 className={`mt-[14px] ${SUBHEAD}`}>ROUTE COMPARISON</h3>
                <div className="mt-[8px] overflow-hidden">
                    <table className="w-[1060px] table-fixed text-center text-[12px] whitespace-nowrap">
                        <colgroup>
                            <col className="w-[107px]"/>
                            <col className="w-[114px]"/>
                            <col className="w-[86px]"/>
                            <col className="w-[267px]"/>
                            <col className="w-[211px]"/>
                            <col className="w-[138px]"/>
                            <col/>
                        </colgroup>
                        <thead>
                            <tr className="h-[30px] border-b-2 border-[#18212f] text-[10px] tracking-wide text-[#454f66] uppercase">
                                <th/>
                                {matrixHead.map((h) => <th key={h} className="font-semibold">{h}</th>)}
                            </tr>
                        </thead>
                        <tbody>
                            <tr className="h-[32px] border-b border-[#18212f]">
                                <th scope="row" className="pl-[11px] text-left font-medium text-[#8795ad]">Status</th>
                                {matrixHead.map((h) => (
                                    <td key={h}>
                                        <span className="inline-block h-[18px] rounded-[2px] border border-[#1b2638] bg-[#121c2b] px-[6px] text-[10px] leading-[15px] font-semibold text-[#8795ad]">OK</span>
                                    </td>
                                ))}
                            </tr>
                            {matrix.map((row) => (
                                <tr key={row.label} className="h-[32px] border-b border-[#18212f]">
                                    <th scope="row" className="pl-[11px] text-left font-medium text-[#8795ad]">{row.label}</th>
                                    {row.cells.map((v, i) => (
                                        <td key={i} className={row.mono ? `text-[10px] ${MONO} ${row.color(v)}` : row.color(v)}>{v}</td>
                                    ))}
                                </tr>
                            ))}
                        </tbody>
                    </table>
                    <div className="pt-px"><ScrollBar thumb="w-[84%]"/></div>
                </div>
            </div>
        </section>
    )
}

function RiskPanel() {
    return (
        <aside className="w-[245px] shrink-0 rounded-[4px] border border-[#1b2638] bg-[#0c131e] px-[14px] pt-[13px] pb-[28px]">
            <h2 className="text-[9px] leading-[16px] font-semibold tracking-widest text-[#4d5970]">RISK EXPOSURE</h2>
            <div className={`mt-[20px] text-center text-[32px] leading-[40px] font-bold text-[#d97f0e] ${MONO}`}>57</div>
            <div className="mt-[-2px] text-center text-[10px] leading-[16px] font-bold tracking-widest text-[#d97f0e]">ELEVATED</div>
            <div className="mt-[23px] flex h-[354px] flex-col justify-between">
                {exposure.map((e) => (
                    <div key={e.label} className="flex items-center">
                        <span className="w-[53px] text-[9px] leading-[13px] text-[#454f66] uppercase">{e.label}</span>
                        <div className="ml-[6px] h-[3px] flex-1 rounded-full bg-[#18202c]">
                            <div className={`h-full rounded-full ${e.color}`} style={{width: `${e.value}%`}}/>
                        </div>
                        <span className={`w-[28px] text-right text-[9px] font-bold text-[#7d8ba5] ${MONO}`}>{e.value}</span>
                    </div>
                ))}
            </div>
            <div className="mt-[14px] grid grid-cols-3 border-t border-[#18202c] pt-[8px] text-center">
                {[["0", "NAVWARNS"], ["75%", "JWC EXP."], ["100%", "CONFIDENCE"]].map(([value, label]) => (
                    <div key={label}>
                        <div className={`text-[10px] leading-[14px] font-bold text-[#d5dcec] ${MONO}`}>{value}</div>
                        <div className="text-[8px] leading-[13px] tracking-wide text-[#3c465a]">{label}</div>
                    </div>
                ))}
            </div>
            <div className="mt-[14px] h-[3px] rounded-full bg-[#0c8f68]"/>
        </aside>
    )
}

export default function App() {
    return (
        <div className="min-h-screen bg-[#04070c] font-['Inter',sans-serif]">
            <Header/>
            <div className="flex">
                <Sidebar/>
                <div className="min-w-0 flex-1 pt-[10px] pr-[14px] pl-[13px]">
                    <div className={`flex h-[32px] items-center rounded-[6px] border border-[#0c2735] bg-[#07121a] px-[15px] text-[10px] text-[#7d8ba5] ${MONO}`}>
                        <TriangleAlert size={13} strokeWidth={1.500} className="mr-[9px] text-[#0e94a4]"/>
                        <span className="flex-1">Pick two ports and hit Calculate. You'll get a risk breakdown with 10 intelligence signals.</span>
                        <button aria-label="Dismiss" className="px-[3px] text-[#4d5970]">x</button>
                    </div>
                    <main className="px-[7px] pt-[21px] pb-[21px]">
                        <h1 className="text-[14px] leading-[22px] font-semibold text-[#dde3f0]">Voyage Scorer</h1>
                        <p className="mb-[20px] text-[11px] leading-[17px] text-[#3c465a]">Port-to-port risk assessment with intelligence briefing</p>
                        <RouteForm/>
                        <div className="mt-[21px] flex items-start gap-[18px]">
                            <div className="min-w-0 flex-1">
                                <StatBar/>
                                <div className="mt-[14px]"><Tabs/></div>
                                <Recommendation/>
                                <div className="mt-[13px] flex gap-[9px] overflow-hidden">
                                    {routeCards.map((route) => <RouteCard key={route.name} route={route}/>)}
                                </div>
                                <div className="mt-[8px]"><ScrollBar thumb="w-[93%]"/></div>
                                <div className="mt-[15px]"><RouteMap/></div>
                                <div className="mt-[14px]"><Comparison/></div>
                                <Detail/>
                                <div className="mt-[14px] flex gap-[10px]">
                                    <button className={SMALL_BUTTON}>Export CSV</button>
                                    <button className={SMALL_BUTTON}>Export JSON</button>
                                    <button className="h-[23px] rounded-[3px] bg-[#0794b5] px-[7px] text-[10px] font-semibold text-white">Track This Voyage</button>
                                </div>
                            </div>
                            <RiskPanel/>
                        </div>
                    </main>
                </div>
            </div>
        </div>
    )
}
